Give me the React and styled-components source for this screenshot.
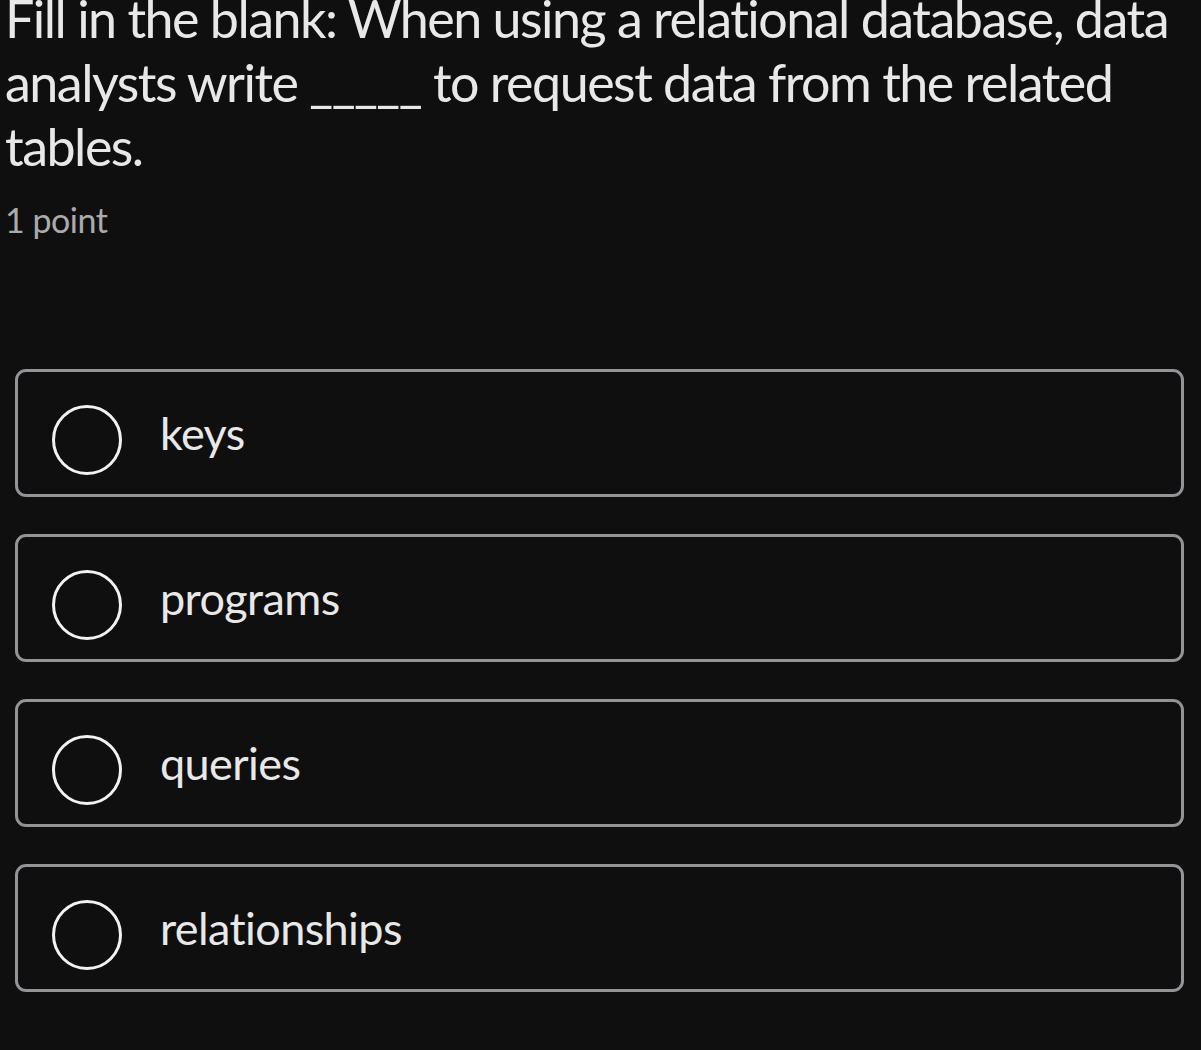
import React from 'react';
import styled, { createGlobalStyle } from 'styled-components';

const GlobalStyle = createGlobalStyle`
  html, body {
    margin: 0;
    padding: 0;
    background: #0f0f0f;
  }
  body {
    font-family: 'Lato', 'Noto Sans', sans-serif;
    color: #e8e8e8;
    overflow: hidden;
  }
`;

const Page = styled.div`
  min-height: 1050px;
  padding: 0 17px 0 0;
  box-sizing: border-box;
`;

const Question = styled.h1`
  margin: -14px 0 0 5px;
  font-size: 52px;
  font-weight: 400;
  line-height: 64px;
  letter-spacing: -1.5px;
  white-space: nowrap;
  color: #e8e8e8;
`;

const Points = styled.div`
  margin: 22px 0 0 5px;
  font-size: 34px;
  line-height: 40px;
  letter-spacing: -0.5px;
  color: #ababab;
`;

const Options = styled.div`
  display: flex;
  flex-direction: column;
  gap: 37px;
  margin: 129px 0 0 15px;
`;

const OptionCard = styled.label`
  display: flex;
  align-items: flex-start;
  gap: 38px;
  height: 128px;
  box-sizing: border-box;
  padding: 33px 0 0 34px;
  border: 3px solid #949498;
  border-radius: 11px;
  cursor: pointer;
`;

const Radio = styled.span`
  flex: none;
  width: 70px;
  height: 70px;
  box-sizing: border-box;
  border: 3px solid #f2f2f2;
  border-radius: 50%;
`;

const OptionText = styled.span`
  font-size: 45px;
  line-height: 56px;
  letter-spacing: -0.6px;
  color: #e8e8e8;
`;

const options = ['keys', 'programs', 'queries', 'relationships'];

export default function App() {
  return (
    <Page>
      <GlobalStyle />
      <Question>
        Fill in the blank: When using a relational database, data<br />
        analysts write _____ to request data from the related<br />
        tables.
      </Question>
      <Points>1 point</Points>
      <Options>
        {options.map((opt) => (
          <OptionCard key={opt}>
            <Radio />
            <OptionText>{opt}</OptionText>
          </OptionCard>
        ))}
      </Options>
    </Page>
  );
}
